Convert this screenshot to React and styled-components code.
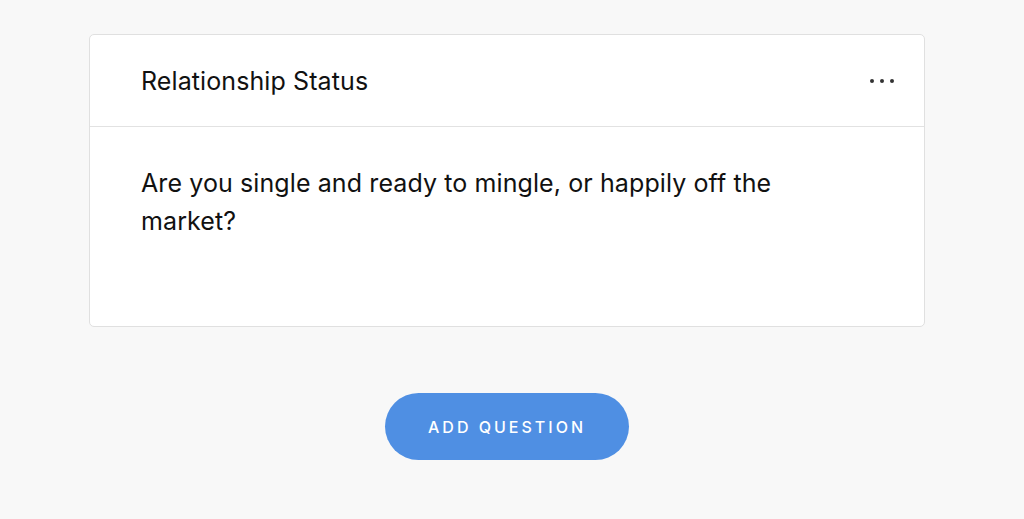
import React from "react";
import styled, { createGlobalStyle } from "styled-components";

const Global = createGlobalStyle`
  html, body { margin: 0; padding: 0; background: #f8f8f8; }
  body { font-family: Inter, "Noto Sans", sans-serif; -webkit-font-smoothing: antialiased; }
`;

const Page = styled.div`
  display: flex;
  flex-direction: column;
  align-items: center;
  padding: 34px 10px 0 0;
`;

const Card = styled.div`
  width: 836px;
  background: #fff;
  border: 1px solid #e0e0e0;
  border-radius: 5px;
  box-sizing: border-box;
`;

const Header = styled.div`
  height: 92px;
  display: flex;
  align-items: center;
  justify-content: space-between;
  padding: 0 30px 0 51px;
  border-bottom: 1px solid #e2e2e2;
  box-sizing: border-box;
`;

const Title = styled.div`
  font-size: 25px;
  color: #111;
  letter-spacing: 0.1px;
  margin-top: 1px;
`;

const Dots = styled.button`
  display: flex;
  gap: 6px;
  background: none;
  border: 0;
  padding: 0;
  cursor: pointer;
  margin-top: 1px;
`;

const Dot = styled.span`
  width: 4px;
  height: 4px;
  border-radius: 50%;
  background: #333;
`;

const Body = styled.div`
  padding: 37px 51px 86px;
`;

const Question = styled.p`
  margin: 0;
  max-width: 680px;
  font-size: 25px;
  line-height: 38px;
  letter-spacing: 0.1px;
  color: #111;
`;

const AddButton = styled.button`
  margin-top: 66px;
  width: 244px;
  height: 67px;
  border: 0;
  border-radius: 34px;
  background: #4f8fe3;
  color: #fff;
  font-family: Inter, "Noto Sans", sans-serif;
  font-size: 16px;
  font-weight: 500;
  letter-spacing: 3px;
  text-transform: uppercase;
  cursor: pointer;
`;

export default function App() {
  return (
    <>
      <Global />
      <Page>
        <Card>
          <Header>
            <Title>Relationship Status</Title>
            <Dots aria-label="More options">
              <Dot />
              <Dot />
              <Dot />
            </Dots>
          </Header>
          <Body>
            <Question>
              Are you single and ready to mingle, or happily off the market?
            </Question>
          </Body>
        </Card>
        <AddButton>Add Question</AddButton>
      </Page>
    </>
  );
}
